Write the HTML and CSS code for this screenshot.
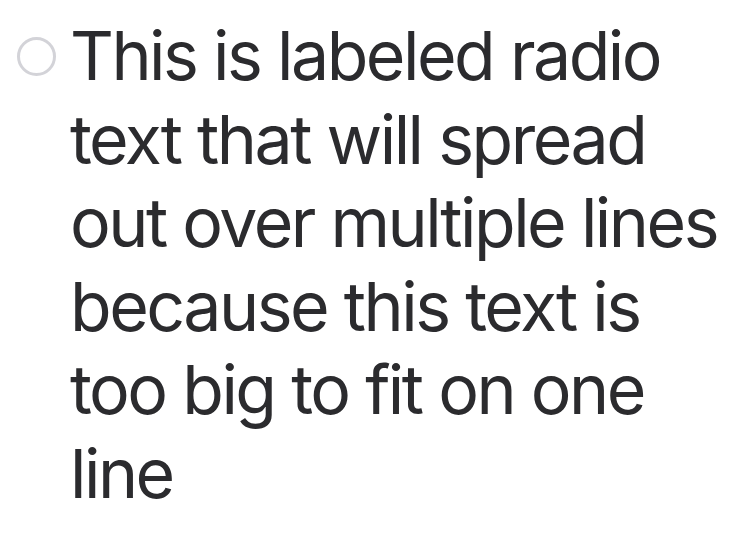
FILE: index.html
```html
<!DOCTYPE html>
<html>
<head>
<meta charset="utf-8">
<link rel="stylesheet" href="styles.css">
</head>
<body>
<label class="radio-row">
  <span class="radio"></span>
  <span class="label-text">This is labeled radio text that will spread out over multiple lines because this text is too big to fit on one line</span>
</label>
</body>
</html>
```
FILE: styles.css
```css
html, body {
  margin: 0;
  padding: 0;
  background: #ffffff;
}
.radio-row {
  display: flex;
  align-items: flex-start;
  gap: 14px;
  padding: 14px 0 0 17px;
  font-family: Inter, "Noto Sans", sans-serif;
}
.radio {
  flex: none;
  width: 39px;
  height: 39px;
  box-sizing: border-box;
  border: 3.5px solid #d3d3d8;
  border-radius: 50%;
  margin-top: 23px;
}
.label-text {
  width: 675px;
  font-size: 68px;
  line-height: 83.5px;
  color: #2b2b2e;
  letter-spacing: -2.5px;
}
```
